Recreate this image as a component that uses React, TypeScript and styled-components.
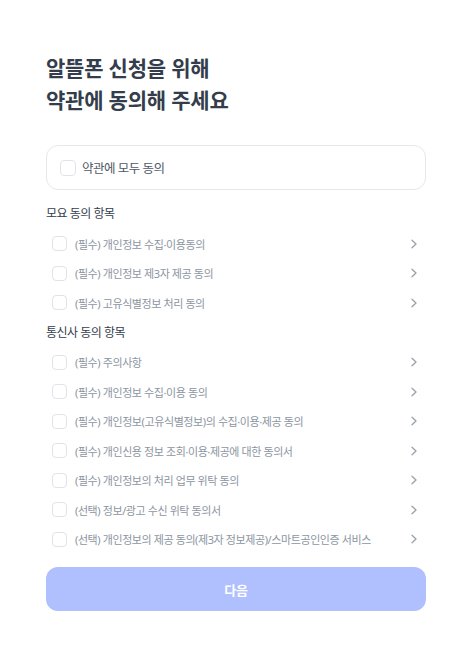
import styled, { createGlobalStyle } from "styled-components";

const GlobalStyle = createGlobalStyle`
  body {
    margin: 0;
    background: #ffffff;
    font-family: "Noto Sans", "Noto Sans CJK KR", sans-serif;
  }
`;

const Page = styled.div`
  width: 466px;
  min-height: 645px;
  box-sizing: border-box;
  padding: 52px 40px 0 46px;
  display: flex;
  flex-direction: column;
`;

const Title = styled.h1`
  margin: 0;
  font-size: 21px;
  line-height: 32px;
  font-weight: 700;
  color: #333d4b;
  letter-spacing: -0.2px;
`;

const AllAgreeBox = styled.label`
  margin-top: 29px;
  height: 45px;
  box-sizing: border-box;
  border: 1px solid #e5e8eb;
  border-radius: 12px;
  display: flex;
  align-items: center;
  gap: 6px;
  padding-left: 13px;
`;

const Check = styled.span<{ size?: number }>`
  width: ${(p) => p.size ?? 15}px;
  height: ${(p) => p.size ?? 15}px;
  box-sizing: border-box;
  border: 1px solid #e0e3e7;
  border-radius: 4px;
  flex-shrink: 0;
`;

const AllAgreeText = styled.span`
  font-size: 12.5px;
  color: #4e5968;
  letter-spacing: -0.5px;
`;

const SectionTitle = styled.h2`
  margin: 0;
  font-size: 12px;
  line-height: 18px;
  font-weight: 400;
  color: #333d4b;
  letter-spacing: -0.5px;
`;

const Section = styled.section<{ top: number }>`
  margin-top: ${(p) => p.top}px;
  display: flex;
  flex-direction: column;
`;

const List = styled.ul`
  list-style: none;
  margin: 6px 0 0;
  padding: 0;
`;

const Row = styled.li`
  height: 29.5px;
  display: flex;
  align-items: center;
  padding-left: 6px;
  padding-right: 8px;
  gap: 8px;
`;

const RowText = styled.span`
  flex: 1;
  font-size: 11px;
  color: #8b95a1;
  letter-spacing: -0.4px;
  white-space: nowrap;
`;

const Chevron = () => (
  <svg width="8" height="10" viewBox="0 0 8 10" fill="none">
    <path d="M2 1.2L6 5L2 8.8" stroke="#9aa1a9" strokeWidth="1.3" strokeLinecap="round" strokeLinejoin="round" />
  </svg>
);

const NextButton = styled.button`
  margin-top: 13px;
  height: 44px;
  border: none;
  border-radius: 12px;
  background: #b0bffd;
  color: #ffffff;
  font-family: inherit;
  font-size: 13px;
  font-weight: 700;
  letter-spacing: -0.3px;
`;

const requiredItems = [
  "(필수) 개인정보 수집·이용동의",
  "(필수) 개인정보 제3자 제공 동의",
  "(필수) 고유식별정보 처리 동의",
];

const carrierItems = [
  "(필수) 주의사항",
  "(필수) 개인정보 수집·이용 동의",
  "(필수) 개인정보(고유식별정보)의 수집·이용·제공 동의",
  "(필수) 개인신용 정보 조회·이용·제공에 대한 동의서",
  "(필수) 개인정보의 처리 업무 위탁 동의",
  "(선택) 정보/광고 수신 위탁 동의서",
  "(선택) 개인정보의 제공 동의(제3자 정보제공)/스마트공인인증 서비스",
];

function AgreeList({ items }: { items: string[] }) {
  return (
    <List>
      {items.map((item) => (
        <Row key={item}>
          <Check />
          <RowText>{item}</RowText>
          <Chevron />
        </Row>
      ))}
    </List>
  );
}

export default function App() {
  return (
    <>
      <GlobalStyle />
      <Page>
        <Title>
          알뜰폰 신청을 위해
          <br />
          약관에 동의해 주세요
        </Title>
        <AllAgreeBox>
          <Check size={16} />
          <AllAgreeText>약관에 모두 동의</AllAgreeText>
        </AllAgreeBox>
        <Section top={15}>
          <SectionTitle>모요 동의 항목</SectionTitle>
          <AgreeList items={requiredItems} />
        </Section>
        <Section top={6}>
          <SectionTitle>통신사 동의 항목</SectionTitle>
          <AgreeList items={carrierItems} />
        </Section>
        <NextButton>다음</NextButton>
      </Page>
    </>
  );
}
